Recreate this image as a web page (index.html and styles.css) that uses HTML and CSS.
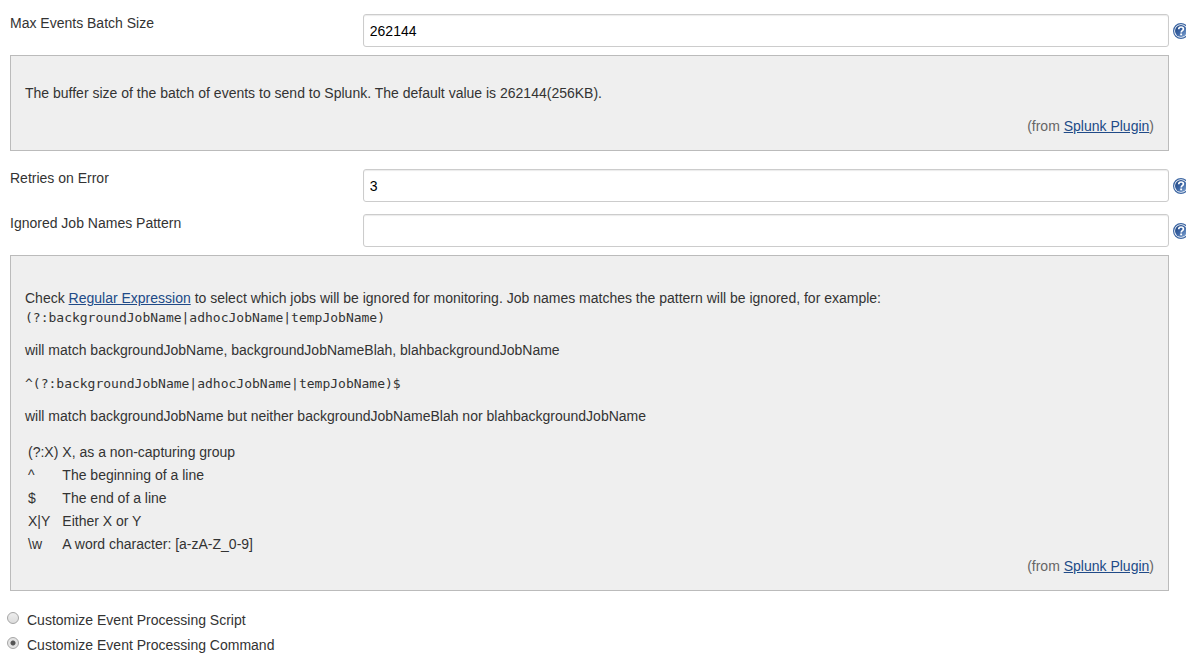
FILE: index.html
```html
<!DOCTYPE html>
<html lang="en">
<head>
<meta charset="utf-8">
<title>Splunk Plugin Configuration</title>
<link rel="stylesheet" href="styles.css">
</head>
<body>
<svg class="defs" aria-hidden="true">
  <defs>
    <linearGradient id="disc" x1="0" y1="0" x2="1" y2="1">
      <stop offset="0" stop-color="#1f447f"/>
      <stop offset="0.5" stop-color="#3a64a4"/>
      <stop offset="1" stop-color="#8fb0d8"/>
    </linearGradient>
    <symbol id="help" viewBox="0 0 16 16">
      <circle cx="8" cy="8" r="7.4" fill="#fff" stroke="#3c66a3" stroke-width="1.2"/>
      <circle cx="8" cy="8" r="6" fill="url(#disc)"/>
      <path d="M5.7 6.2C5.8 4.6 6.8 4 8.1 4c1.400 0 2.300.8 2.300 1.900 0 1.700-2.200 1.800-2.200 3.500" fill="none" stroke="#fff" stroke-width="1.700"/>
      <rect x="7.200" y="10.500" width="1.900" height="1.800" fill="#fff"/>
    </symbol>
  </defs>
</svg>
<form class="config">
  <div class="row">
    <label class="name" for="batch">Max Events Batch Size</label>
    <input class="field" id="batch" type="text" value="262144">
    <a class="help" href="#batch-help" aria-label="Help for Max Events Batch Size"><svg class="icon"><use href="#help"/></svg></a>
  </div>
  <div class="panel" id="batch-help">
    <p class="text">The buffer size of the batch of events to send to Splunk. The default value is 262144(256KB).</p>
    <div class="from">(from <a class="link" href="#plugin">Splunk Plugin</a>)</div>
  </div>
  <div class="row">
    <label class="name" for="retries">Retries on Error</label>
    <input class="field" id="retries" type="text" value="3">
    <a class="help" href="#retries" aria-label="Help for Retries on Error"><svg class="icon"><use href="#help"/></svg></a>
  </div>
  <div class="row">
    <label class="name" for="ignored">Ignored Job Names Pattern</label>
    <input class="field" id="ignored" type="text" value="">
    <a class="help" href="#ignored-help" aria-label="Help for Ignored Job Names Pattern"><svg class="icon"><use href="#help"/></svg></a>
  </div>
  <div class="panel" id="ignored-help">
    <div class="intro">Check <a class="link" href="#regex">Regular Expression</a> to select which jobs will be ignored for monitoring. Job names matches the pattern will be ignored, for example:<br><code class="code">(?:backgroundJobName|adhocJobName|tempJobName)</code></div>
    <p class="text">will match backgroundJobName, backgroundJobNameBlah, blahbackgroundJobName</p>
    <p class="text"><code class="code">^(?:backgroundJobName|adhocJobName|tempJobName)$</code></p>
    <p class="text">will match backgroundJobName but neither backgroundJobNameBlah nor blahbackgroundJobName</p>
    <table class="syntax">
      <tr><td>(?:X)</td><td>X, as a non-capturing group</td></tr>
      <tr><td>^</td><td>The beginning of a line</td></tr>
      <tr><td>$</td><td>The end of a line</td></tr>
      <tr><td>X|Y</td><td>Either X or Y</td></tr>
      <tr><td>\w</td><td>A word character: [a-zA-Z_0-9]</td></tr>
    </table>
    <div class="from">(from <a class="link" href="#plugin">Splunk Plugin</a>)</div>
  </div>
  <div class="options">
    <div class="option"><input class="radio" type="radio" name="processing" id="script"><label for="script">Customize Event Processing Script</label></div>
    <div class="option"><input class="radio" type="radio" name="processing" id="command" checked><label for="command">Customize Event Processing Command</label></div>
  </div>
</form>
</body>
</html>
```
FILE: styles.css
```css
* { box-sizing: border-box; }

body {
  margin: 0;
  background: #fff;
  color: #333;
  font: 14px/19px "Liberation Sans", Arial, sans-serif;
}

.defs { display: block; width: 0; height: 0; }

.config { padding: 14px 0 4px 10px; }

.row {
  display: grid;
  grid-template-columns: 30% 1fr 17px;
  margin-bottom: 12px;
}

.row:has(+ .panel) { margin-bottom: 8px; }

.field {
  width: 100%;
  height: 33px;
  padding: 0 6px;
  border: 1px solid #ccc;
  border-radius: 3px;
  background: #fff;
  box-shadow: inset 0 1px 1px rgba(0, 0, 0, 0.08);
  color: #000;
  font: inherit;
}

.help {
  display: flex;
  align-items: center;
  padding-left: 4px;
  overflow: hidden;
}

.icon { flex: none; width: 16px; height: 16px; }

.panel {
  margin: 0 17px 18px 0;
  padding: 14px;
  border: 1px solid #bbb;
  background: #efefef;
}

.text { margin: 14px 0; }

.intro { padding-top: 19px; }

.code {
  display: block;
  font: 13px/19px Consolas, "DejaVu Sans Mono", monospace;
}

.intro br { display: none; }

.link { color: #204a87; text-decoration: underline; }

.from { color: #666; text-align: right; }

.syntax { border-spacing: 2px; }
.syntax td { padding: 1px; }

.options {
  display: grid;
  gap: 6px;
  margin: 20px 0 0 -3px;
}

.option { display: flex; align-items: flex-start; gap: 8px; }

.radio {
  appearance: none;
  flex: none;
  width: 12px;
  height: 12px;
  margin: 1px 0 0;
  border: 1px solid #a5a5a5;
  border-radius: 50%;
  background: linear-gradient(#ededed, #dcdcdc);
}

.radio:checked {
  background: radial-gradient(circle, #555 0 2px, #e4e4e4 3px);
}
```
